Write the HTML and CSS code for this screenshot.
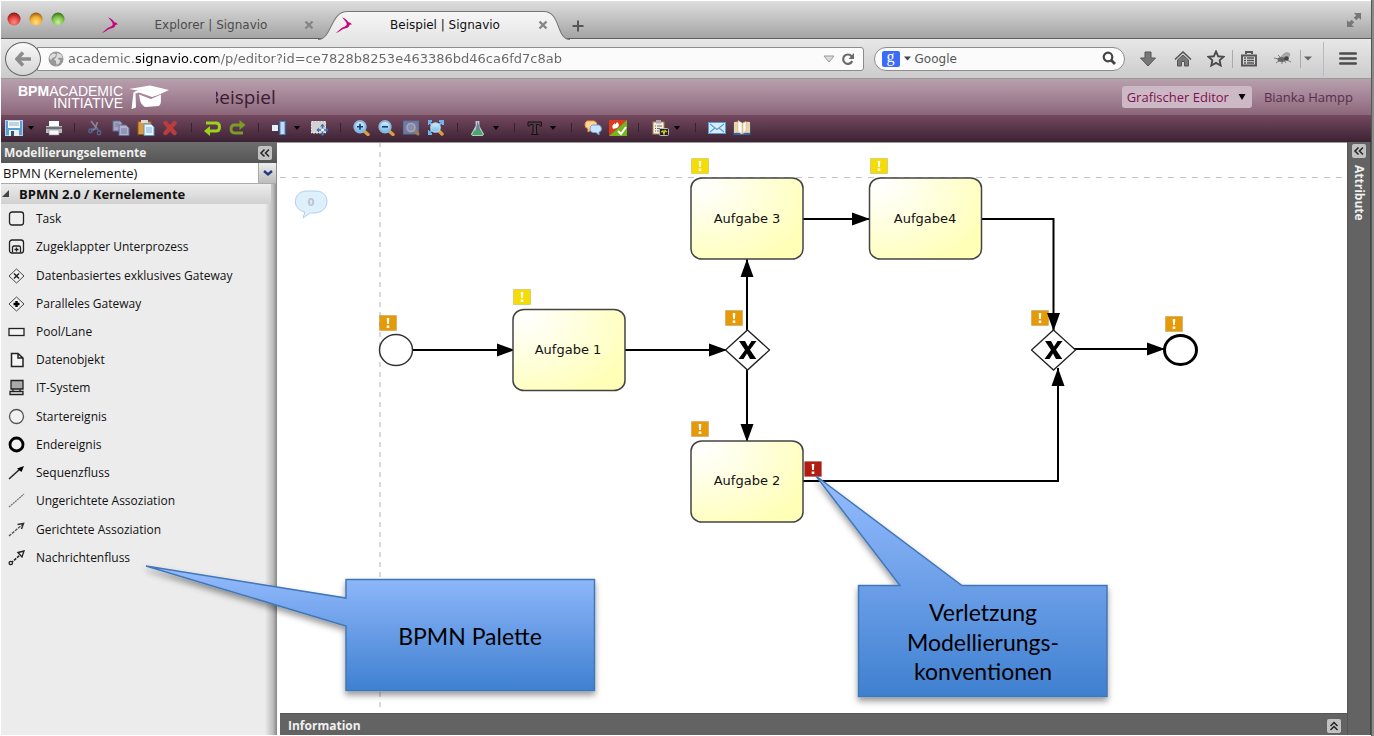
FILE: index.html
```html
<!DOCTYPE html>
<html lang="de">
<head>
<meta charset="utf-8">
<title>Beispiel | Signavio</title>
<link rel="stylesheet" href="styles.css">
</head>
<body>
<svg class="defs" aria-hidden="true">
  <defs>
    <linearGradient id="tabFill" x1="0" y1="0" x2="0" y2="1"><stop offset="0" stop-color="#f6f6f6"/><stop offset="1" stop-color="#e6e6e6"/></linearGradient>
    <radialGradient id="red" cx=".5" cy=".75" r=".7"><stop offset="0" stop-color="#ff8d86"/><stop offset=".6" stop-color="#e0403c"/><stop offset="1" stop-color="#8f1a1a"/></radialGradient>
    <radialGradient id="amber" cx=".5" cy=".75" r=".7"><stop offset="0" stop-color="#ffe27a"/><stop offset=".6" stop-color="#f0ac30"/><stop offset="1" stop-color="#9a6212"/></radialGradient>
    <radialGradient id="green" cx=".5" cy=".75" r=".7"><stop offset="0" stop-color="#c8f29a"/><stop offset=".6" stop-color="#7cc04a"/><stop offset="1" stop-color="#3c7a1c"/></radialGradient>
    <radialGradient id="taskFill" cx="0.1" cy="0.1" r="1.05"><stop offset="0" stop-color="#fff"/><stop offset="1" stop-color="#ffffb8"/></radialGradient>
    <linearGradient id="callFill" x1="0" y1="0" x2="0" y2="1"><stop offset="0" stop-color="#97bdff"/><stop offset="1" stop-color="#3f80d0"/></linearGradient>
    <linearGradient id="lens" x1="0" y1="0" x2="0" y2="1"><stop offset="0" stop-color="#d8f0ff"/><stop offset="1" stop-color="#6cb8ee"/></linearGradient>
    <filter id="shade" x="-10%" y="-10%" width="120%" height="130%"><feDropShadow dx="0" dy="4" stdDeviation="3" flood-color="#000" flood-opacity=".4"/></filter>
    <symbol id="gazelle" viewBox="0 0 16 16"><path d="M0 15.800C3 14 4.500 11.500 7 10.300C9 9.300 10.500 9 10.800 7.200C10.500 5 8.500 3 6 .2C9 1.500 11.600 3 12.200 5.300C13.300 5 14.500 5.800 16 7.500C14.500 7.300 13.800 7.600 13.300 8.500C13 10.500 10.500 11.200 8 11.800C5.500 12.500 4 15 0 15.800Z" fill="#c3077b"/></symbol>
    <symbol id="cross" viewBox="0 0 10 10"><path d="M1.500 1.500L8.500 8.500M8.500 1.500L1.500 8.500" stroke="#858585" stroke-width="2.400"/></symbol>
    <symbol id="left2" viewBox="0 0 14 14"><path d="M6.500 3.500L3 7L6.500 10.500M11 3.500L7.500 7L11 10.500" fill="none" stroke="#2a2a2a" stroke-width="1.600"/></symbol>
    <symbol id="warn" viewBox="0 0 18 16"><rect x=".5" y=".5" width="17" height="15" stroke="#000" stroke-opacity=".12"/><path d="M7.700 3H10.300L9.900 9H8.100ZM7.700 10.500H10.300V13H7.700Z" fill="#fff"/></symbol>
    <symbol id="gate" viewBox="0 0 46 42"><path d="M23 1L45 21L23 41L1 21Z" fill="#fff" stroke="#222" stroke-width="1.300"/><path d="M14.500 12H20.500L23.500 17.500L27 12H32L25.500 20.800L31.800 30H25.500L22.500 24.500L19 30H14L20.500 21Z" fill="#000"/></symbol>
    <marker id="arrow" markerUnits="userSpaceOnUse" markerWidth="18" markerHeight="14" refX="18" refY="7" orient="auto"><path d="M0 .5L18 7L0 13.500Z"/></marker>
  </defs>
</svg>

<header class="tabs">
  <div class="lights">
    <svg width="58" height="16" viewBox="0 0 58 16"><circle cx="7" cy="7" r="6.500" fill="url(#red)"/><circle cx="29" cy="7" r="6.500" fill="url(#amber)"/><circle cx="51" cy="7" r="6.500" fill="url(#green)"/></svg>
  </div>
  <div class="tab">
    <svg class="fav"><use href="#gazelle"/></svg>
    <a href="#explorer">Explorer | Signavio</a>
    <button class="close" aria-label="Tab schließen"><svg><use href="#cross"/></svg></button>
  </div>
  <div class="tab active">
    <svg class="tabshape" viewBox="0 0 250 29" preserveAspectRatio="none"><path d="M0 28.500C14 28.500 12 1.500 29 1.500H224C241 1.500 236 28.500 250 28.500" fill="url(#tabFill)" stroke="#777"/></svg>
    <svg class="fav"><use href="#gazelle"/></svg>
    <a href="#beispiel">Beispiel | Signavio</a>
    <button class="close" aria-label="Tab schließen"><svg><use href="#cross"/></svg></button>
  </div>
  <button class="plus" aria-label="Neuer Tab"><svg width="12" height="12" viewBox="0 0 12 12"><path d="M6 .5V11.500M.5 6H11.500" stroke="#555" stroke-width="2"/></svg></button>
  <button class="full" aria-label="Vollbild"><svg width="16" height="16" viewBox="0 0 16 16"><path d="M8 1H15V8L12.800 5.800L10.300 8.300L7.800 5.700L10.200 3.200ZM1 8L3.200 10.200L5.700 7.700L8.200 10.200L5.700 12.800L7.900 15H1Z" fill="#777"/></svg></button>
</header>

<nav class="nav">
  <button class="back" aria-label="Zurück"><svg width="17" height="16" viewBox="0 0 17 16"><path d="M8 1.500L2 8L8 14.500M2.500 8H16" fill="none" stroke="#8c8c8c" stroke-width="3.500"/></svg></button>
  <div class="urlbar">
    <svg width="16" height="16" viewBox="0 0 16 16"><circle cx="8" cy="8" r="7.500" fill="#979797"/><path d="M2 5L5 2.500L8 3L7 6L4 7L3.500 9L1.500 8ZM9 2L13 3.500L14.500 7L11 6.500L9.500 8L12 9L11.500 12L8.500 14L8 10L6 8.500L8.500 6Z" fill="#dedede"/></svg>
    <input class="url" aria-label="Adresse" value="academic.signavio.com/p/editor?id=ce7828b8253e463386bd46ca6fd7c8ab">
    <svg width="12" height="8" viewBox="0 0 12 8"><path d="M1 1H11L6 7Z" fill="#ddd" stroke="#999"/></svg>
    <button aria-label="Neu laden"><svg width="14" height="14" viewBox="0 0 14 14"><path d="M10.500 4.200A4.700 4.700 0 1 0 11.200 9" fill="none" stroke="#6a6a6a" stroke-width="2.200"/><path d="M13 1V7H7.500L9.500 5L11 3Z" fill="#6a6a6a"/></svg></button>
  </div>
  <div class="search">
    <span class="goo">g</span>
    <svg width="7" height="5" viewBox="0 0 7 5"><path d="M0 .5H7L3.500 4.500Z" fill="#444"/></svg>
    <input aria-label="Suche" placeholder="Google">
    <svg width="15" height="15" viewBox="0 0 15 15"><circle cx="6" cy="6" r="4.300" fill="none" stroke="#444" stroke-width="2.200"/><path d="M9 9L13 13" stroke="#444" stroke-width="2.800"/></svg>
  </div>
  <div class="tools">
    <button class="t1" aria-label="Downloads"><svg width="16" height="16" viewBox="0 0 16 16"><path d="M5 1H11V7H15.500L8 15L.5 7H5Z" fill="#777" stroke="#555"/></svg></button>
    <button class="t1" aria-label="Startseite"><svg width="18" height="16" viewBox="0 0 18 16"><path d="M1 8.500L9 1L17 8.500" fill="none" stroke="#555" stroke-width="1.600"/><path d="M3.500 9L9 4L14.500 9V15H10.500V10.500H7.500V15H3.500Z" fill="#777" stroke="#555"/></svg></button>
    <button class="t2" aria-label="Lesezeichen"><svg width="18" height="17" viewBox="0 0 18 17"><path d="M9 1.500L11.200 6.300L16.500 6.900L12.600 10.400L13.700 15.500L9 12.900L4.300 15.500L5.400 10.400L1.500 6.900L6.800 6.300Z" fill="none" stroke="#4c4c4c" stroke-width="1.900"/></svg></button>
    <span class="rule"></span>
    <button class="t2" aria-label="Lesezeichenliste"><svg width="16" height="16" viewBox="0 0 16 16"><path d="M5 3V1H11V3M1 4.500H15V14.500H1Z" fill="none" stroke="#555" stroke-width="1.900"/><path d="M3 7H5M6 7H13M3 9.500H5M6 9.500H13M3 12H5M6 12H13" stroke="#555" stroke-width="1.400"/></svg></button>
    <button class="t1" aria-label="Erweiterung"><svg width="18" height="14" viewBox="0 0 18 14"><path d="M7 5Q12 -2 16 2Q16 6 9 8Z" fill="#aaa" stroke="#888" stroke-width=".5"/><path d="M0 6L5 7M2 11L6 8M8 12V9M12 11L10 8M4 3L7 6M13 8L17 10" stroke="#666" stroke-width=".8"/><ellipse cx="7.500" cy="7.500" rx="4" ry="2.500" fill="#666"/><circle cx="12.500" cy="6.500" r="2.300" fill="#444"/></svg></button>
    <span class="rule"></span>
    <button class="t3" aria-label="Mehr"><svg width="8" height="5" viewBox="0 0 8 5"><path d="M0 .5H8L4 4.500Z" fill="#666"/></svg></button>
    <span class="rule long"></span>
    <button class="t4" aria-label="Menü"><svg width="18" height="13" viewBox="0 0 18 13"><path d="M1.300 1.500H16.700M1.300 6.500H16.700M1.300 11.500H16.700" stroke="#4c4c4c" stroke-width="2.600" stroke-linecap="round"/></svg></button>
  </div>
</nav>

<div class="brandbar">
  <div class="brand"><span class="brandtext"><span><b>BPM</b>ACADEMIC</span><span>INITIATIVE</span></span>
    <svg width="42" height="25" viewBox="0 0 42 25"><path d="M1 4L22 .5L41 5L30 10L24 12L11 7.500L7.500 8.500L8 22.500L3.500 24L5.500 7.500L8 6L22 3.500L10 5.500Z" fill="#fff"/><path d="M11 9.500L23 14L33 9.500C32.500 15 34 18 31 21L17 22C12 19 12 15 11 9.500Z" fill="#fff"/></svg>
  </div>
  <h1><span>Beispiel</span></h1>
  <button class="mode">Grafischer Editor<svg width="8" height="6" viewBox="0 0 8 6"><path d="M.5 0H7.500L4 6Z"/></svg></button>
  <a class="user" href="#user">Bianka Hampp</a>
</div>

<div class="toolbar">
  <button aria-label="Speichern"><svg viewBox="0 0 18 16"><rect x=".5" y=".5" width="17" height="15" fill="#5d9fd4" stroke="#a9d5f5"/><rect x="3" y="1" width="12" height="7" fill="#f4f8fc"/><path d="M4 3H14M4 5H14" stroke="#9ab"/><rect x="4" y="10" width="10" height="6" fill="#eee"/><rect x="6" y="11" width="3" height="5" fill="#357"/></svg></button>
  <button class="drop" aria-label="Speicheroptionen"><svg viewBox="0 0 6 4"><path d="M0 0H6L3 4Z"/></svg></button>
  <button aria-label="Drucken"><svg viewBox="0 0 18 16"><rect x="4" y="1" width="10" height="6" fill="#fff"/><path d="M1 6H17V13H1Z" fill="#b9bdc1"/><path d="M1 8H17" stroke="#6d7378" stroke-width="2"/><path d="M4 10H14V15H4Z" fill="#f5f8fa" stroke="#888" stroke-width=".6"/></svg></button>
  <i></i>
  <button aria-label="Ausschneiden"><svg viewBox="0 0 18 16"><path d="M4 1L11 10M10.500 2L8 9L4 11" fill="none" stroke="#87859b" stroke-width="1.700"/><path d="M7.500 8L2 9.500M9 8.500L14 11.500" stroke="#54658f" stroke-width="1.400"/><circle cx="3.500" cy="11" r="1.800" fill="none" stroke="#54658f" stroke-width="1.300"/><circle cx="12" cy="13" r="1.800" fill="none" stroke="#54658f" stroke-width="1.300"/></svg></button>
  <button aria-label="Kopieren"><svg viewBox="0 0 18 16"><path d="M1 1H8L10 3V11H1Z" fill="#a9a4b8" stroke="#5f6d9a"/><path d="M7 5H14L17 8V15.500H7Z" fill="#b5b1c6" stroke="#5f6d9a"/><path d="M3 4H7M3 6H6M9 9H15M9 11H15M9 13H15" stroke="#6b7cab"/></svg></button>
  <button aria-label="Einfügen"><svg viewBox="0 0 18 16"><rect x="1" y="1.500" width="13" height="13" fill="#d99b3c" stroke="#8e5a1c"/><rect x="4" y="0" width="7" height="3" fill="#ddd"/><path d="M7 4H14L17 7V15.500H7Z" fill="#e8f4fd" stroke="#5d93c6"/><path d="M9 8H15M9 10H15M9 12H15" stroke="#7fb0dc"/></svg></button>
  <button aria-label="Löschen"><svg viewBox="0 0 18 16"><path d="M3.500 3L12.500 13M12.500 3L3.500 13" stroke="#b93d3d" stroke-width="4.400" stroke-linecap="round"/></svg></button>
  <i></i>
  <button aria-label="Rückgängig"><svg viewBox="0 0 18 16"><path d="M2 3H12Q15.500 3 15.500 7Q15.500 11 12 11H6" fill="none" stroke="#9bd21a" stroke-width="3"/><path d="M6 6V16L0 11Z" fill="#9bd21a"/></svg></button>
  <button aria-label="Wiederholen"><svg viewBox="0 0 18 16"><path d="M12 5H5.500Q2 5 2 9Q2 13 5.500 13H14" fill="none" stroke="#7c9a2a" stroke-width="2.800"/><path d="M10.500 0V10L16.500 5Z" fill="#7c9a2a"/></svg></button>
  <i></i>
  <button aria-label="Ausrichten"><svg viewBox="0 0 18 16"><rect x="1" y="5" width="6" height="6" fill="#e4f2fd"/><rect x="9" y="1.500" width="5" height="13" fill="#bfdcf6" stroke="#4389cf"/></svg></button>
  <button class="drop" aria-label="Ausrichtungsoptionen"><svg viewBox="0 0 6 4"><path d="M0 0H6L3 4Z"/></svg></button>
  <button aria-label="Größe anpassen"><svg viewBox="0 0 18 16"><path d="M.5 1.500H14.500V13H.5Z" fill="#d2d2d2" stroke="#f2f2f2" stroke-dasharray="2 1"/><path d="M6 10H17M11.500 4.500V15.500" stroke="#3e6fae" stroke-width="1.600"/><path d="M11.500 4L14 6.500H9ZM11.500 16L9 13.500H14ZM5.500 10L8 7.500V12.500ZM17.500 10L15 7.500V12.500Z" fill="#3e6fae"/><circle cx="11.500" cy="10" r="1.500" fill="#fff"/></svg></button>
  <i></i>
  <button aria-label="Vergrößern"><svg viewBox="0 0 18 16"><path d="M11 11L15 14.500" stroke="#d99f3c" stroke-width="3.400" stroke-linecap="round"/><circle cx="7" cy="6.800" r="5.800" fill="url(#lens)" stroke="#8fb4d8" stroke-width="1.800"/><path d="M4 6.800H10M7 3.800V9.800" stroke="#16416f" stroke-width="1.600"/></svg></button>
  <button aria-label="Verkleinern"><svg viewBox="0 0 18 16"><path d="M11 11L15 14.500" stroke="#d99f3c" stroke-width="3.400" stroke-linecap="round"/><circle cx="7" cy="6.800" r="5.800" fill="url(#lens)" stroke="#8fb4d8" stroke-width="1.800"/><path d="M4 6.800H10" stroke="#16416f" stroke-width="1.600"/></svg></button>
  <button aria-label="Originalgröße"><svg viewBox="0 0 18 16"><rect x=".5" y="1" width="15" height="13" fill="#77799c" stroke="#5573a0"/><path d="M12 11L15 14" stroke="#a08248" stroke-width="3" stroke-linecap="round"/><circle cx="8" cy="7.500" r="4" fill="#8291b0" stroke="#a8a5bb" stroke-width="1.600"/></svg></button>
  <button aria-label="Einpassen"><svg viewBox="0 0 18 16"><path d="M0 5V1H4M11 1H15V5M0 10V14H4M0 1L4 5M15 1L11 5M0 14L4 10" fill="none" stroke="#6db5ef" stroke-width="2"/><path d="M11 11L14 14" stroke="#d99f3c" stroke-width="3.400" stroke-linecap="round"/><circle cx="7.500" cy="7.500" r="4.600" fill="url(#lens)" stroke="#b7d7f0" stroke-width="1.500"/></svg></button>
  <i></i>
  <button aria-label="Prüfen"><svg viewBox="0 0 18 16"><path d="M6 1V6L1.500 14Q1.500 15.500 3 15.500H12Q13.500 15.500 13.500 14L9 6V1" fill="#b9cbd6" stroke="#d5e2e8" stroke-width=".7"/><path d="M7.500 1L10.500 11H5.500Z" fill="#6b8694"/><path d="M4 10.500H11L13 15H2Z" fill="#46a869"/></svg></button>
  <button class="drop" aria-label="Prüfoptionen"><svg viewBox="0 0 6 4"><path d="M0 0H6L3 4Z"/></svg></button>
  <i></i>
  <button aria-label="Schrift"><svg viewBox="0 0 18 16"><path d="M1 2H14.500V6H13L12 4.500H9.500V13L11 14.500H4.500L6 13V4.500H3.500L2.500 6H1Z" fill="#4f3a46" stroke="#171015"/></svg></button>
  <button class="drop" aria-label="Schriftoptionen"><svg viewBox="0 0 6 4"><path d="M0 0H6L3 4Z"/></svg></button>
  <i></i>
  <button aria-label="Kommentare"><svg viewBox="0 0 18 16"><path d="M3 1H10Q13 2 13 5Q12 9 8 9L4 12V8.500Q1 8 1 5Q1 2 3 1Z" fill="#ffd591" stroke="#f29a45"/><path d="M8 5H15Q17.500 6 17.500 9Q17 12 15 12L15 15L12 12.500H9Q6 12 6 9Q6 6 8 5Z" fill="#c8e3fb" stroke="#6da4dc"/></svg></button>
  <button aria-label="Freigabe"><svg viewBox="0 0 18 16"><path d="M0 0H18L0 16Z" fill="#e03a1c"/><path d="M18 0V16H0Z" fill="#77b51f"/><path d="M4 9Q2 5 6 3Q6 6 8 2Q12 5 8 8Z" fill="#fff"/><path d="M9 11L12 14L17 7" fill="none" stroke="#fff" stroke-width="2"/></svg></button>
  <i></i>
  <button aria-label="Berichte"><svg viewBox="0 0 18 16"><rect x="2" y="2" width="11" height="12" fill="#f3eee2" stroke="#b3834a"/><rect x="5" y="0" width="5" height="3.500" fill="#aaa"/><path d="M4 6H5M6 6H11M4 8.500H5M6 8.500H9M4 11H5M6 11H8" stroke="#666"/><rect x="8.500" y="8.500" width="9" height="7" rx="1" fill="#222" stroke="#bbb"/><path d="M10 12L12 11L13 14L14 10.500L16 12" fill="none" stroke="#dccb22" stroke-width="1.300"/></svg></button>
  <button class="drop" aria-label="Berichtsoptionen"><svg viewBox="0 0 6 4"><path d="M0 0H6L3 4Z"/></svg></button>
  <i></i>
  <button aria-label="Nachricht"><svg viewBox="0 0 18 16"><rect x=".5" y="2.500" width="17" height="11" fill="#d8edfc" stroke="#5d9bd6"/><path d="M2 4L9 9.500L16 4M2 12L7 8M16 12L11 8" fill="none" stroke="#5d9bd6" stroke-width="1.200"/></svg></button>
  <button aria-label="Handbuch"><svg viewBox="0 0 18 16"><path d="M.5 3H17.500V15H.5Z" fill="#2f66a6"/><path d="M1 2Q5 1 9 3Q13 1 17 2V13Q13 12 9 14Q5 12 1 13Z" fill="#ecd2a4"/><path d="M5 .5L9 3V14L5 11.500ZM10 3L13 1.500V11L10 13Z" fill="#fff" stroke="#d5b279" stroke-width=".6"/></svg></button>
</div>

<main class="work">
  <aside class="side">
    <div class="sidehead"><h2>Modellierungselemente</h2><button aria-label="Einklappen"><svg width="14" height="14"><use href="#left2"/></svg></button></div>
    <div class="picker">
      <select aria-label="Elementauswahl"><option>BPMN (Kernelemente)</option></select>
      <span class="pick"><svg width="10" height="7" viewBox="0 0 10 7"><path d="M1 1L5 4.500L9 1" fill="none" stroke="#243a80" stroke-width="2.400"/></svg></span>
    </div>
    <h3><svg width="8" height="8" viewBox="0 0 8 8"><path d="M7 0V7H0Z" fill="#444"/></svg>BPMN 2.0 / Kernelemente</h3>
    <ul>
      <li><svg viewBox="0 0 18 18"><rect x="1.500" y="2" width="14" height="13" rx="2.500" fill="#efefef" stroke="#222" stroke-width="1.300"/></svg>Task</li>
      <li><svg viewBox="0 0 18 18"><rect x="1.500" y="2" width="14" height="13" rx="2.500" fill="#efefef" stroke="#222" stroke-width="1.300"/><path d="M4.500 14.500V9.500Q4.500 8 6 8H11Q12.500 8 12.500 9.500V14.500M8.500 9.500V13.500M6.500 11.500H10.500" fill="none" stroke="#222" stroke-width="1.300"/></svg>Zugeklappter Unterprozess</li>
      <li><svg viewBox="0 0 18 18"><path d="M8.500 2L16 9L8.500 16L1 9Z" fill="#f2f2f2" stroke="#444"/><path d="M6 6.500L11 11.500M11 6.500L6 11.500" stroke="#222" stroke-width="1.500"/></svg>Datenbasiertes exklusives Gateway</li>
      <li><svg viewBox="0 0 18 18"><path d="M8.500 2L16 9L8.500 16L1 9Z" fill="#f2f2f2" stroke="#444"/><path d="M8.500 6V12M5.500 9H11.500" stroke="#000" stroke-width="2.400"/></svg>Paralleles Gateway</li>
      <li><svg viewBox="0 0 18 18"><rect x="1" y="5.500" width="15" height="7" fill="#f4f4f4" stroke="#222" stroke-width="1.300"/></svg>Pool/Lane</li>
      <li><svg viewBox="0 0 18 18"><path d="M3.500 2.500H10L15 7V15.500H3.500ZM10 2.500V7H15" fill="#f6f6f6" stroke="#222" stroke-width="1.500"/></svg>Datenobjekt</li>
      <li><svg viewBox="0 0 18 18"><path d="M3 1.500H15V10H3Z" fill="#aaa" stroke="#222" stroke-width="1.300"/><path d="M2 12.500H15V15.500H2ZM5 10V12M12 10V12" fill="#eee" stroke="#222" stroke-width="1.300"/></svg>IT-System</li>
      <li><svg viewBox="0 0 18 18"><circle cx="8.500" cy="8.500" r="7" fill="#f2f2f2" stroke="#555" stroke-width="1.300"/></svg>Startereignis</li>
      <li><svg viewBox="0 0 18 18"><circle cx="8.500" cy="8.500" r="6.500" fill="#f2f2f2" stroke="#000" stroke-width="2.800"/></svg>Endereignis</li>
      <li><svg viewBox="0 0 18 18"><path d="M1 15L12 5" stroke="#222" stroke-width="1.500"/><path d="M16 2L13.500 8L9 4.500Z"/></svg>Sequenzfluss</li>
      <li><svg viewBox="0 0 18 18"><path d="M1 15L16 2" stroke="#777" stroke-width="1.300" stroke-dasharray="2 .7"/></svg>Ungerichtete Assoziation</li>
      <li><svg viewBox="0 0 18 18"><path d="M1 15L15 3" stroke="#555" stroke-width="1.400" stroke-dasharray="3 1"/><path d="M9.500 3.500L15.500 2.500L13.500 8" fill="none" stroke="#333" stroke-width="1.500"/></svg>Gerichtete Assoziation</li>
      <li><svg viewBox="0 0 18 18"><path d="M3 14L12 6" stroke="#222" stroke-width="1.500" stroke-dasharray="3 1"/><path d="M10 3.500L16 2L14 8Z" fill="#eee" stroke="#222" stroke-width="1.300"/><circle cx="2.800" cy="14" r="1.700" fill="#eee" stroke="#222" stroke-width="1.300"/></svg>Nachrichtenfluss</li>
    </ul>
  </aside>
  <section class="center">
    <div class="canvas">
      <svg class="diagram">
        <g transform="translate(-277 -142)">
          <path d="M380 142V1400" stroke="#c9c9c9" stroke-width="2" stroke-opacity=".7" stroke-dasharray="5 5"/>
          <path d="M280 177.500H3000" stroke="#c4c4c4" stroke-dasharray="6 6"/>
          <path d="M306 191H316C331 191 331 213 314 213H310L303 218L305 212C292 210 292 192 306 191Z" fill="#dff0fd" stroke="#b2cfea"/>
          <text class="count" x="311" y="206">0</text>
          <g fill="none" stroke="#000" stroke-width="2">
            <path d="M413 350H515" marker-end="url(#arrow)"/>
            <path d="M625 350H727" marker-end="url(#arrow)"/>
            <path d="M747 330V259" marker-end="url(#arrow)"/>
            <path d="M747 370V442" marker-end="url(#arrow)"/>
            <path d="M803 219H870" marker-end="url(#arrow)"/>
          </g>
          <use href="#warn" x="379" y="315" width="18" height="16" fill="#e79a08"/>
          <use href="#warn" x="513" y="289" width="18" height="16" fill="#f5dc05"/>
          <use href="#warn" x="691" y="158" width="18" height="16" fill="#f5dc05"/>
          <use href="#warn" x="870" y="158" width="18" height="16" fill="#f5dc05"/>
          <use href="#warn" x="725" y="310" width="18" height="16" fill="#e79a08"/>
          <use href="#warn" x="691" y="421" width="18" height="16" fill="#e79a08"/>
          <use href="#warn" x="804" y="461" width="18" height="16" fill="#b41c12"/>
          <use href="#warn" x="1031" y="310" width="18" height="16" fill="#e79a08"/>
          <use href="#warn" x="1165" y="316" width="18" height="16" fill="#e79a08"/>
          <g fill="none" stroke="#000" stroke-width="2">
            <path d="M981 219H1053.500V331" marker-end="url(#arrow)"/>
            <path d="M803 481H1058V368" marker-end="url(#arrow)"/>
            <path d="M1074 349H1165" marker-end="url(#arrow)"/>
          </g>
          <ellipse cx="396" cy="350" rx="16.500" ry="15.500" fill="#fff" stroke="#333" stroke-width="1.500"/>
          <ellipse cx="1180.500" cy="350" rx="16" ry="14.500" fill="#fff" stroke="#000" stroke-width="3"/>
          <g fill="url(#taskFill)" stroke="#444" stroke-width="1.500">
            <rect x="513" y="309.500" width="112" height="81" rx="11" ry="10"/>
            <rect x="691" y="178" width="112" height="81" rx="11" ry="10"/>
            <rect x="869.500" y="178" width="112" height="81" rx="11" ry="10"/>
            <rect x="691" y="441" width="112" height="81" rx="11" ry="10"/>
          </g>
          <use href="#gate" x="724.500" y="329" width="46" height="42"/>
          <use href="#gate" x="1030.500" y="329" width="46" height="42"/>
          <g class="label">
            <text x="568" y="354">Aufgabe 1</text><text x="747" y="223">Aufgabe 3</text><text x="925" y="223">Aufgabe4</text><text x="747" y="485">Aufgabe 2</text>
          </g>
        </g>
      </svg>
    </div>
    <footer class="info"><h2>Information</h2><button aria-label="Ausklappen"><svg width="14" height="14" viewBox="0 0 14 14"><path d="M3.500 7L7 3.500L10.500 7M3.500 11L7 7.500L10.500 11" fill="none" stroke="#222" stroke-width="1.500"/></svg></button></footer>
  </section>
  <aside class="attr"><button aria-label="Attribute ausklappen"><svg width="14" height="14"><use href="#left2"/></svg></button><h2>Attribute</h2></aside>
</main>

<svg class="callouts">
  <g fill="url(#callFill)" stroke="#4177b8" stroke-width="1.500" filter="url(#shade)">
    <path d="M146 566L346 598V579.500H594.500V690.500H346V626Z"/>
    <path d="M816 476L962 585.500H1107V696.500H858.500V585.500H900Z"/>
  </g>
  <text x="470" y="645">BPMN Palette</text>
  <text x="983" y="621">Verletzung</text><text x="983" y="651">Modellierungs-</text><text x="983" y="680">konventionen</text>
</svg>
</body>
</html>
```

FILE: styles.css
```css
* { box-sizing: border-box; }
body {
  margin: 0; height: 100vh; min-height: 600px; position: relative; overflow: hidden;
  display: flex; flex-direction: column;
  padding: 1px 3px 1px 1px; background: #fff linear-gradient(to left, #8a8a8a 2px, #555 2px, #555 3px, #fff 3px);
  font: 12px/16px "Open Sans", "Noto Sans", sans-serif; color: #111;
}
button { border: 0; padding: 0; background: none; font: inherit; color: inherit; display: flex; align-items: center; justify-content: center; }
input { border: 0; padding: 0; background: none; font: inherit; outline: 0; min-width: 0; }
a { color: inherit; text-decoration: none; }
h1, h2, h3, ul { margin: 0; padding: 0; }
svg { display: block; flex: none; }
.defs { position: absolute; width: 0; height: 0; }

.tabs { height: 38px; flex: none; display: flex; align-items: center; background: linear-gradient(#dedede, #a4a4a4); border-bottom: 1px solid #5f5f5f; font: 12px/16px "DejaVu Sans", sans-serif; color: #4c4c4c; }
.lights { width: 101px; padding-left: 6px; }
.tab { display: flex; align-items: center; width: 212px; height: 38px; padding-top: 10px; }
.tab a { flex: 1; text-align: center; }
.tab .fav { width: 16px; height: 16px; }
.close, .close svg { width: 10px; height: 10px; }
.tab.active { width: 252px; height: 38px; margin-left: 4px; padding: 10px 22px 0 18px; position: relative; color: #111; }
.tab.active > * { position: relative; }
.tab.active .tabshape { position: absolute; left: 0; bottom: -1px; width: 100%; height: 30px; }
.plus { width: 16px; height: 38px; padding-top: 12px; }
.full { margin-left: auto; margin-right: 9px; }

.nav { height: 40px; flex: none; display: flex; align-items: center; padding-left: 4px; background: linear-gradient(#e8e8e8, #cbcbcb); border-bottom: 1px solid #999; font: 12px/16px "DejaVu Sans", sans-serif; color: #555; }
.back { width: 36px; height: 34px; border: 1px solid #666; border-radius: 50%; background: linear-gradient(#fafafa, #d5d5d5); z-index: 1; }
.urlbar { flex: 805; height: 24px; display: flex; align-items: center; gap: 6px; margin-left: -4px; padding: 0 8px 0 10px; border: 1px solid #8c8c8c; border-radius: 0 3px 3px 0; background: #fbfbfb; }
.url { flex: 1; margin-left: -2px; font-size: 13px; color: transparent; background: linear-gradient(to right, #666 66px, #000 66px, #000 150px, #666 150px); -webkit-background-clip: text; background-clip: text; }
.search { flex: 235; height: 24px; display: flex; align-items: center; gap: 4px; margin-left: 10px; padding: 0 7px; border: 1px solid #8c8c8c; border-radius: 12px; background: #fbfbfb; }
.search input { flex: 1; }
.search input::placeholder { color: #555; opacity: 1; }
.goo { width: 18px; height: 16px; border-radius: 2px; background: #3c6cf5; color: #fff; font: 16px/12px "Liberation Serif", serif; text-align: center; }
.tools { display: flex; align-items: center; padding-left: 5px; padding-right: 5px; }
.t1, .t2, .t3, .t4 { height: 30px; }
.t1 { width: 35px; }
.t2 { width: 32px; }
.t3 { width: 14px; }
.t4 { width: 36px; margin-left: 6px; }
.rule { width: 1px; height: 18px; background: #aaa; }
.rule.long { height: 34px; margin-left: 8px; background: #b4bcc2; }

.brandbar { height: 36px; flex: none; display: flex; align-items: center; background: linear-gradient(#b8a0ae, #a38496 50%, #8b6679); }
.brand { width: 215px; padding-left: 17px; display: flex; align-items: center; gap: 5px; color: #fff; font: 14px/12px "Liberation Sans", sans-serif; }
.brandtext { display: flex; flex-direction: column; align-items: flex-end; }
.brandbar h1 { overflow: hidden; font: 19px/24px "Open Sans", sans-serif; color: #3c1b31; margin-right: auto; }
.brandbar h1 span { display: block; margin-left: -9px; }
.mode { height: 22px; padding: 0 6px 0 5px; gap: 9px; border-radius: 3px; background: #cdb8c5; color: #7c1150; font-size: 13px; }
.mode svg { fill: #000; }
.user { margin: 0 18px 0 12px; color: #5a2c4b; font-size: 13px; }

.toolbar { height: 27px; flex: none; display: flex; align-items: center; padding-bottom: 2px; background: linear-gradient(#74495f, #3c2234); }
.toolbar button { width: 25px; height: 24px; }
.toolbar button svg { width: 18px; height: 16px; }
.toolbar .drop { width: 15px; justify-content: flex-start; padding-left: 2px; }
.toolbar .drop svg { width: 6px; height: 4px; }
.toolbar i { width: 1px; height: 9px; margin: 0 8px; background: #38202f; }

.work { flex: 1; min-height: 0; display: flex; }
.side { width: 276px; flex: none; display: flex; flex-direction: column; background: linear-gradient(to left, #858585, #bcbcbc 4px, #ececec 12px); }
.sidehead { height: 21px; display: flex; align-items: center; justify-content: space-between; padding: 0 5px 0 3px; background: linear-gradient(#6e6e6e, #555); }
h2 { font: bold 12px/16px "Open Sans", sans-serif; color: #f0f0f0; }
.sidehead button, .info button, .attr button { width: 14px; height: 14px; border-radius: 2px; background: #c2c2c2; }
.picker { height: 21px; display: grid; grid-template-columns: 1fr 18px; margin-right: 1px; border-bottom: 1px solid #aaa; background: #fff; }
.picker select { appearance: none; border: 0; padding: 1px 2px 0; background: #fff; font: 13px/19px "Open Sans", sans-serif; color: #111; min-width: 0; }
.pick { display: flex; align-items: center; justify-content: center; background: linear-gradient(#eee, #bbb); border-left: 1px solid #aaa; }
.side h3 { height: 20px; display: flex; align-items: center; gap: 9px; padding-left: 1px; margin-right: 6px; background: linear-gradient(#ececec, #d0d0d0); font: bold 13px/18px "Open Sans", sans-serif; }
.side ul { list-style: none; display: grid; height: 368px; padding-top: 1px; }
.side li { display: flex; align-items: center; gap: 10px; padding-left: 7px; }
.side li svg { width: 18px; height: 18px; }

.center { flex: 1; min-width: 0; display: flex; flex-direction: column; background: #fff; }
.canvas { flex: 1; min-height: 0; overflow: hidden; border-top: 1px solid #999; }
.diagram { width: 100%; height: 100%; margin-top: -1px; }
.label { font: 13px "DejaVu Sans", sans-serif; text-anchor: middle; fill: #111; }
.count { font: bold 10px "DejaVu Sans", sans-serif; text-anchor: middle; fill: #bcc4ca; }
.info { height: 22px; flex: none; display: flex; align-items: center; justify-content: space-between; margin-left: 3px; padding: 2px 6px 0 8px; background: #636363; border-top: 1px solid #555; }
.attr { width: 24px; flex: none; display: flex; flex-direction: column; align-items: center; gap: 7px; padding-top: 2px; background: #636363; border-left: 1px solid #555; border-right: 1px solid #484848; }
.attr h2 { writing-mode: vertical-rl; }

.callouts { position: absolute; left: 0; top: 0; width: 100%; height: 100%; pointer-events: none; }
.callouts text { font: 23px Lato, sans-serif; text-anchor: middle; fill: #000; }
```
